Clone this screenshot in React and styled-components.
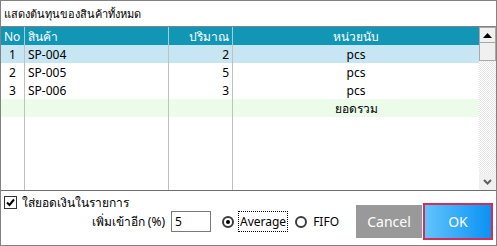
import styled, { createGlobalStyle } from 'styled-components';

const GlobalStyle = createGlobalStyle`
  html, body {
    margin: 0;
    padding: 0;
    background: #fff;
  }
  body {
    font-family: Tahoma, "Noto Sans", "DejaVu Sans", sans-serif;
    font-size: 12px;
    color: #000;
  }
`;

const Frame = styled.div`
  width: 497px;
  height: 246px;
  box-sizing: border-box;
  border: 1px solid #828282;
  display: flex;
  flex-direction: column;
  background: #fff;
`;

const Title = styled.div`
  height: 25px;
  border-bottom: 1px solid #828282;
  padding: 0 3px;
  display: flex;
  align-items: center;
  font-size: 11px;
`;

const GridArea = styled.div`
  height: 163px;
  display: flex;
  border-bottom: 1px solid #6e6e6e;
`;

const Table = styled.div`
  flex: 1;
  display: flex;
  flex-direction: column;
`;

const Row = styled.div`
  display: grid;
  grid-template-columns: 24px 144px 64px 1fr;
  height: ${(p) => (p.$fill ? 'auto' : '18px')};
  flex: ${(p) => (p.$fill ? 1 : 'none')};
  background: ${(p) => p.$bg || '#fff'};
  color: ${(p) => (p.$head ? '#fff' : '#000')};
`;

const Cell = styled.div`
  box-sizing: border-box;
  border-right: ${(p) => (p.$last ? 'none' : `1px solid ${p.$head ? '#9fcfdc' : '#c0c0c0'}`)};
  display: flex;
  align-items: center;
  justify-content: ${(p) => p.$align || 'flex-start'};
  padding: 0 3px;
  white-space: nowrap;
  overflow: hidden;
`;

const Scrollbar = styled.div`
  width: 17px;
  display: flex;
  flex-direction: column;
  background: repeating-conic-gradient(#ffffff 0 25%, #e4e4e4 0 50%) 0 0 / 2px 2px;
`;

const ScrollButton = styled.div`
  height: ${(p) => (p.$plain ? '17px' : '16px')};
  box-sizing: border-box;
  border: ${(p) => (p.$plain ? 'none' : '1px solid #a8a8a8')};
  background: #f0f0f0;
  display: flex;
  align-items: center;
  justify-content: center;
`;

const Track = styled.div`
  flex: 1;
`;

const Thumb = styled.div`
  height: 18px;
  box-sizing: border-box;
  border: 1px solid #a8a8a8;
  border-top: none;
  background: #f0f0f0;
`;

const Bottom = styled.div`
  flex: 1;
  position: relative;
  padding: 4px 3px 0;
`;

const CheckRow = styled.label`
  display: flex;
  align-items: center;
  gap: 5px;
  height: 15px;
`;

const CheckBox = styled.span`
  width: 13px;
  height: 13px;
  box-sizing: border-box;
  border: 1px solid #333;
  background: #fff;
  display: flex;
  align-items: center;
  justify-content: center;
`;

const OptionRow = styled.div`
  display: flex;
  align-items: center;
  margin-top: 1px;
`;

const PercentLabel = styled.span`
  width: 167px;
  text-align: right;
  padding-right: 6px;
  box-sizing: border-box;
`;

const NumberInput = styled.div`
  width: 40px;
  height: 21px;
  box-sizing: border-box;
  border: 1px solid #7a7a7a;
  padding: 0 3px;
  display: flex;
  align-items: center;
  font-size: 12px;
`;

const Radio = styled.span`
  width: 12px;
  height: 12px;
  box-sizing: border-box;
  border-radius: 50%;
  border: 2px solid #3c3c3c;
  background: #fff;
  display: flex;
  align-items: center;
  justify-content: center;
  margin: 0 4px 0 ${(p) => p.$ml || 0}px;
  &::after {
    content: '';
    width: 4px;
    height: 4px;
    border-radius: 50%;
    background: ${(p) => (p.$on ? '#000' : 'transparent')};
  }
`;

const RadioLabel = styled.span`
  padding: 1px 1px;
  border: 1px dotted ${(p) => (p.$focus ? '#000' : 'transparent')};
`;

const Buttons = styled.div`
  position: absolute;
  right: 3px;
  top: 12px;
  display: flex;
  align-items: center;
  gap: 1px;
`;

const Button = styled.button`
  font-family: "Noto Sans", sans-serif;
  font-size: 14px;
  color: #fff;
  cursor: pointer;
  box-sizing: border-box;
  width: ${(p) => (p.$primary ? '70px' : '66px')};
  height: ${(p) => (p.$primary ? '37px' : '33px')};
  border: ${(p) => (p.$primary ? '2px solid #d42d5a' : 'none')};
  background: ${(p) =>
    p.$primary ? 'linear-gradient(90deg, #62c3fd, #0a92f4)' : '#999999'};
  padding: 0;
`;

const rows = [
  { no: 1, code: 'SP-004', qty: 2, unit: 'pcs', bg: '#c7e6f3' },
  { no: 2, code: 'SP-005', qty: 5, unit: 'pcs' },
  { no: 3, code: 'SP-006', qty: 3, unit: 'pcs' },
];

export default function App() {
  return (
    <>
      <GlobalStyle />
      <Frame>
        <Title>แสดงต้นทุนของสินค้าทั้งหมด</Title>
        <GridArea>
          <Table>
            <Row $head $bg="#1196b5">
              <Cell $head>No</Cell>
              <Cell $head>สินค้า</Cell>
              <Cell $head $align="flex-end">ปริมาณ</Cell>
              <Cell $head $last $align="center">หน่วยนับ</Cell>
            </Row>
            {rows.map((r) => (
              <Row key={r.no} $bg={r.bg}>
                <Cell $align="center">{r.no}</Cell>
                <Cell>{r.code}</Cell>
                <Cell $align="flex-end">{r.qty}</Cell>
                <Cell $last $align="center">{r.unit}</Cell>
              </Row>
            ))}
            <Row $bg="#ebfde9">
              <Cell />
              <Cell />
              <Cell />
              <Cell $last $align="center">ยอดรวม</Cell>
            </Row>
            <Row $fill>
              <Cell />
              <Cell />
              <Cell />
              <Cell $last />
            </Row>
          </Table>
          <Scrollbar>
            <ScrollButton>
              <svg width="9" height="5" viewBox="0 0 9 5">
                <path d="M0 5 L4.5 0 L9 5 Z" fill="#000" />
              </svg>
            </ScrollButton>
            <Thumb />
            <Track />
            <ScrollButton $plain>
              <svg width="9" height="6" viewBox="0 0 9 6">
                <path d="M1 1 L4.5 4.5 L8 1" stroke="#606060" strokeWidth="2" fill="none" />
              </svg>
            </ScrollButton>
          </Scrollbar>
        </GridArea>
        <Bottom>
          <CheckRow>
            <CheckBox>
              <svg width="9" height="9" viewBox="0 0 9 9">
                <path d="M1 4.5 L3.5 7 L8 1.5" stroke="#000" strokeWidth="2" fill="none" />
              </svg>
            </CheckBox>
            ใส่ยอดเงินในรายการ
          </CheckRow>
          <OptionRow>
            <PercentLabel>เพิ่มเข้าอีก (%)</PercentLabel>
            <NumberInput>5</NumberInput>
            <Radio $on $ml={11} />
            <RadioLabel $focus>Average</RadioLabel>
            <Radio $ml={7} />
            <RadioLabel>FIFO</RadioLabel>
          </OptionRow>
          <Buttons>
            <Button>Cancel</Button>
            <Button $primary>OK</Button>
          </Buttons>
        </Bottom>
      </Frame>
    </>
  );
}
